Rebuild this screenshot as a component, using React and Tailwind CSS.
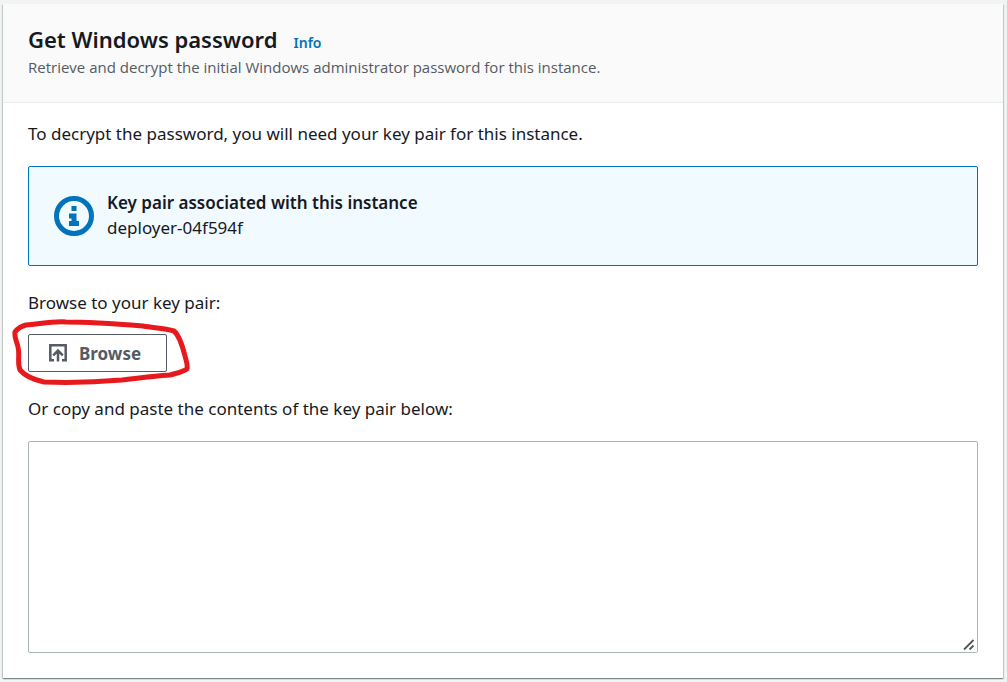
import React from "react";

function InfoIcon() {
  return (
    <svg aria-hidden="true" viewBox="0 0 40 40" className="h-10 w-10 shrink-0 text-[#0073bb]">
      <circle cx="20" cy="20" r="17.5" fill="none" stroke="currentColor" strokeWidth="5" />
      <path d="M17.5 10h5v5h-5zM15 17.500h7.500v7.500h2.500v5H15v-5h2.500v-2.500H15z" fill="currentColor" />
    </svg>
  );
}

function UploadIcon() {
  return (
    <svg
      aria-hidden="true"
      viewBox="0 0 20 20"
      className="h-5 w-5 shrink-0"
      fill="none"
      stroke="currentColor"
      strokeWidth="2.500"
    >
      <path d="M6 17.300H2.300V2.300h15.400v15H14" />
      <path d="M10 18.500V8M5.200 12.300L10 7.500l4.800 4.800" />
    </svg>
  );
}

function MarkerRing() {
  return (
    <svg
      aria-hidden="true"
      viewBox="0 0 180 70"
      className="pointer-events-none absolute -left-4 -top-4 h-[70px] w-[180px] max-w-none"
      fill="none"
      stroke="#e8191c"
      strokeWidth="5"
      strokeLinecap="round"
      strokeLinejoin="round"
    >
      <path d="M3 14C6 10 10 8 14 7C28 6 40 3 54 4C80 4 106 6 131 8C142 10 152 10 162 13C168 18 171 30 173 38C174 42 176 47 175 51C171 54 165 55 158 57C143 58 127 60 110 62C86 64 58 65 32 64C23 62 14 59 8 52C5 45 8 37 6 29C5 24 2 19 3 14Z" />
    </svg>
  );
}

function ResizeGrip() {
  return (
    <svg
      aria-hidden="true"
      viewBox="0 0 16 16"
      className="pointer-events-none absolute right-px bottom-px h-4 w-4 bg-white"
      stroke="#555"
      strokeWidth="1.800"
    >
      <path d="M3 13.500l9.500-9.500M8.500 13.500l4-4" />
    </svg>
  );
}

export default function App() {
  return (
    <div className="min-h-screen bg-[#f2f3f3] px-[3px] py-1 font-['Noto_Sans','Open_Sans',sans-serif] text-[17px] leading-[25px] text-[#16191f]">
      <main className="mr-px bg-white shadow-[0_1px_1px_0_rgba(0,28,36,0.3),1px_1px_1px_0_rgba(0,28,36,0.15),-1px_1px_1px_0_rgba(0,28,36,0.15)]">
        <header className="border-b border-[#eaeded] bg-[#fafafa] px-[25px] pt-[21px] pb-[21px]">
          <div className="flex items-baseline gap-4">
            <h1 className="text-[22px] leading-7 font-semibold">Get Windows password</h1>
            <a href="#info" className="text-sm font-semibold text-[#0073bb]">
              Info
            </a>
          </div>
          <p className="font-['Open_Sans','Noto_Sans',sans-serif] text-[15px] leading-7 text-[#545b64]">
            Retrieve and decrypt the initial Windows administrator password for this instance.
          </p>
        </header>

        <div className="px-[25px] pt-[18px] pb-[25px]">
          <p>To decrypt the password, you will need your key pair for this instance.</p>

          <section className="mt-5 flex items-center gap-[13px] rounded-[2px] border border-[#0073bb] bg-[#f1faff] px-[25px] py-[23px]">
            <InfoIcon />
            <div className="pb-0.5">
              <h2 className="font-semibold">Key pair associated with this instance</h2>
              <p>deployer-04f594f</p>
            </div>
          </section>

          <p className="mt-6">Browse to your key pair:</p>
          <div className="relative mt-[19px] w-fit">
            <button
              type="button"
              className="flex h-[38px] items-center gap-[11px] rounded-[2px] border border-[#545b64] bg-white pr-[25px] pl-[19px] font-bold text-[#545b64]"
            >
              <UploadIcon />
              Browse
            </button>
            <MarkerRing />
          </div>

          <label htmlFor="key-contents" className="mt-6 block">
            Or copy and paste the contents of the key pair below:
          </label>
          <div className="relative mt-5">
            <textarea
              id="key-contents"
              className="block h-[212px] w-full resize-y rounded-[2px] border border-[#aab7b8] bg-white px-3 py-1"
            />
            <ResizeGrip />
          </div>
        </div>
      </main>
    </div>
  );
}
